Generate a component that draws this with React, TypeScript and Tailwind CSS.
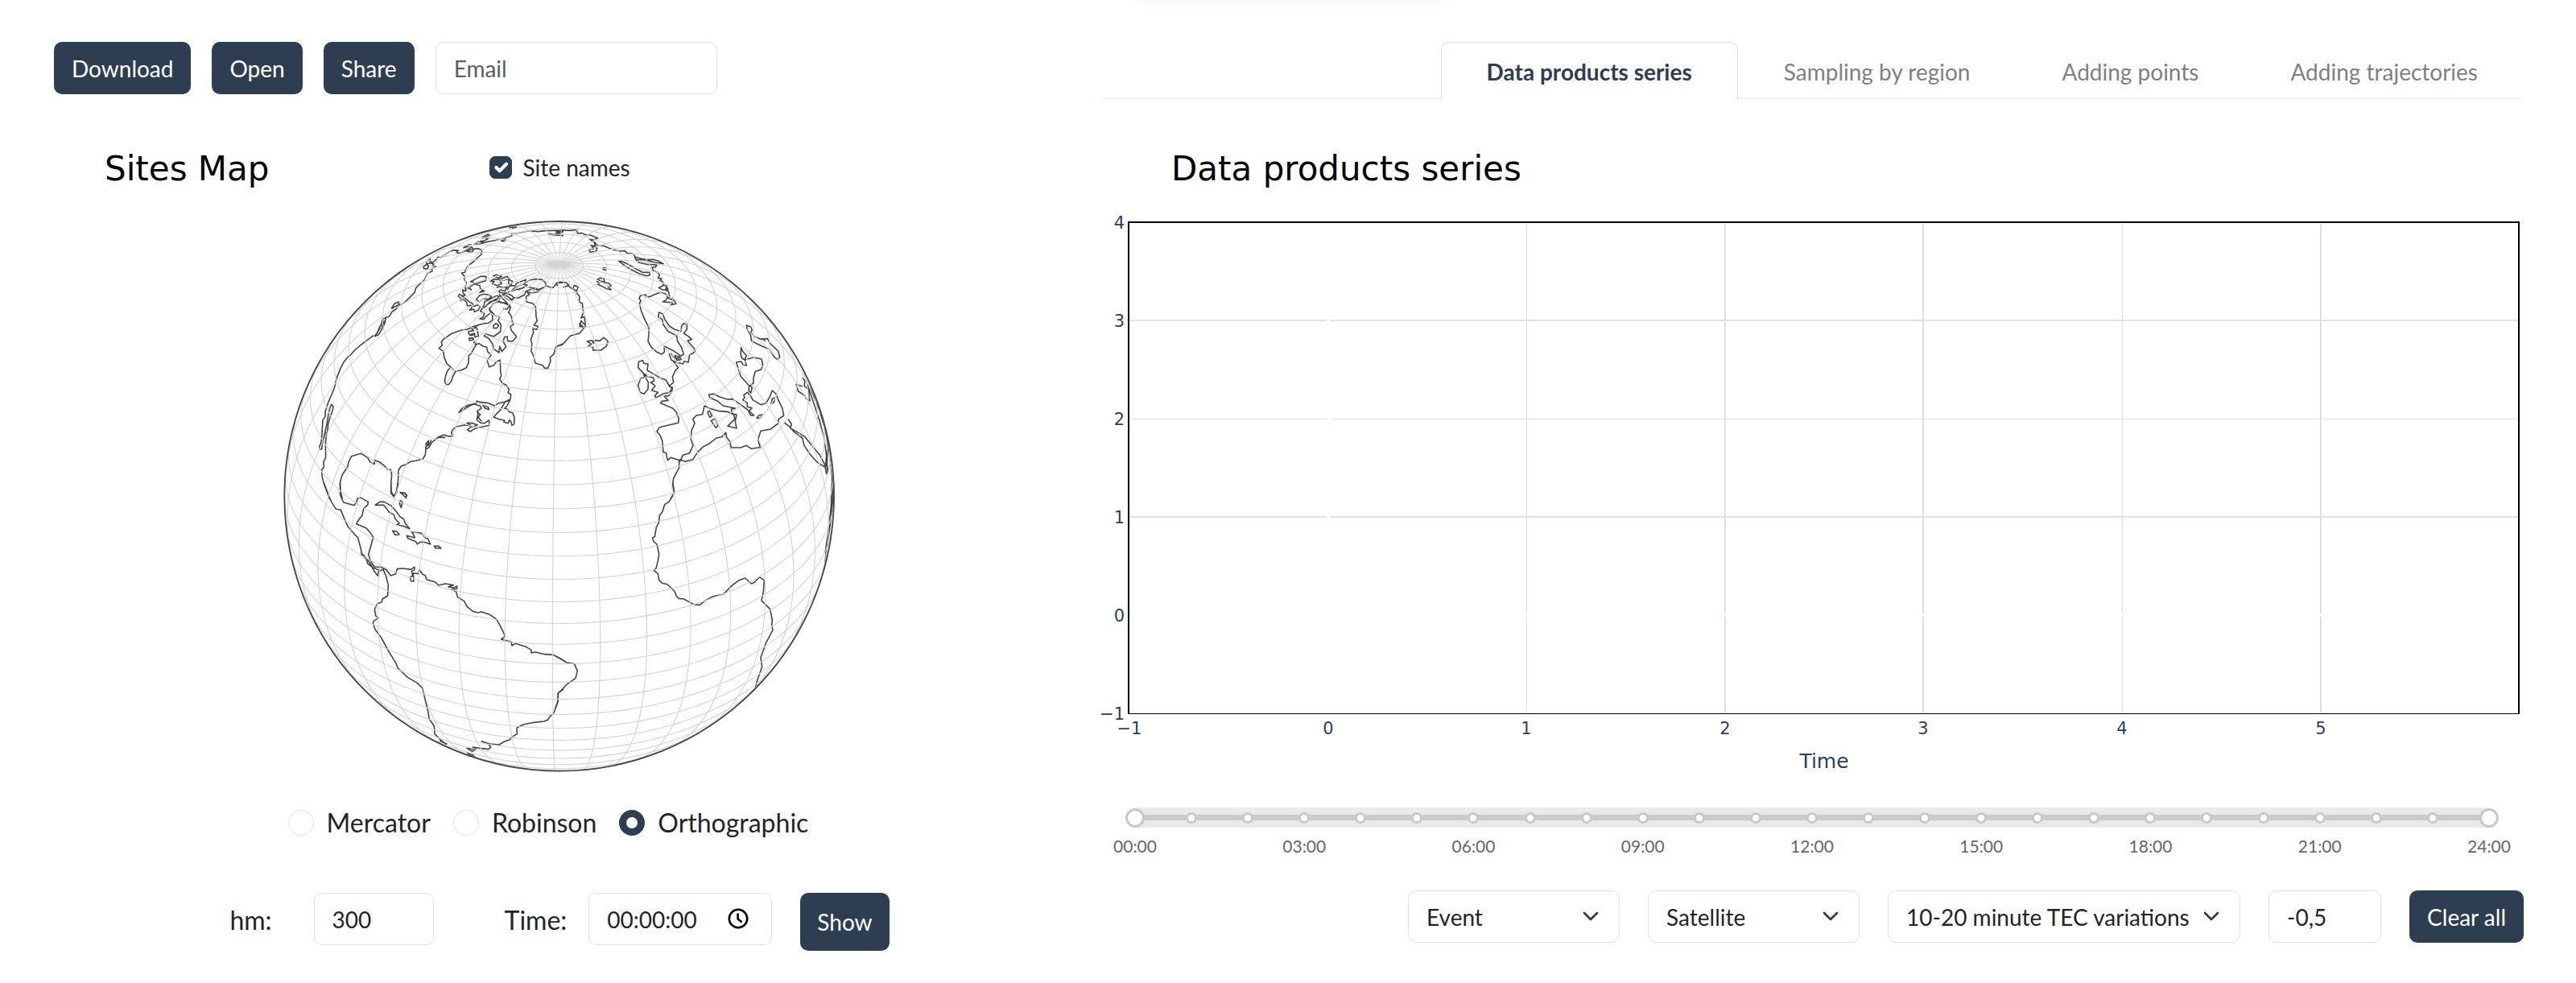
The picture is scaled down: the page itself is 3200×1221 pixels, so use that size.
import { ChevronDown } from "lucide-react";
import type { ReactNode } from "react";

const BTN =
  "h-[65px] rounded-[10px] bg-[#2c3e50] px-[22px] text-[28px] leading-[42px] text-white";
const FIELD =
  "h-[65px] rounded-[10px] border border-[#dee2e6] bg-white px-[22px] text-[28px] text-[#212529] placeholder:text-[#5b5e61]";

/* ---------- Globe (orthographic projection) ---------- */

const CX = 1064;
const CY = 1069;
const R = 1024;
const LON0 = -38.6;
const LAT0 = 32.6;

function project(lon: number, lat: number): [number, number] | null {
  const k = Math.PI / 180;
  const l = (lon - LON0) * k;
  const p = lat * k;
  const p0 = LAT0 * k;
  const c = Math.sin(p0) * Math.sin(p) + Math.cos(p0) * Math.cos(p) * Math.cos(l);
  if (c < 0) return null;
  return [
    CX + R * Math.cos(p) * Math.sin(l),
    CY - R * (Math.cos(p0) * Math.sin(p) - Math.sin(p0) * Math.cos(p) * Math.cos(l)),
  ];
}

function trace(points: [number, number][]): string {
  let d = "";
  let pen = false;
  for (const [lon, lat] of points) {
    const q = project(lon, lat);
    if (q) d += (pen ? "L" : "M") + q[0].toFixed(1) + " " + q[1].toFixed(1);
    pen = q !== null;
  }
  return d;
}

function graticule(): string {
  let d = "";
  for (let lon = -180; lon < 180; lon += 10) {
    const pts: [number, number][] = [];
    for (let lat = -90; lat <= 90; lat += 1) pts.push([lon, lat]);
    d += trace(pts);
  }
  for (let lat = -85; lat <= 85; lat += 5) {
    const pts: [number, number][] = [];
    for (let lon = -220; lon <= 140; lon += 1) pts.push([lon, lat]);
    d += trace(pts);
  }
  return d;
}

const GRATICULE = graticule();

/* Coastlines, grouped by quadrant of the globe */
const NORTH_WEST = [
  // Pacific coast, Baja California, Alaska
  "M209 1080L200 1055 188 1025 180 995 179 970 187 960 186 940 194 925 193 880 195 850 196 830",
  "M215 727L222 735 220 748 210 775 203 800 200 830 196 845 188 850 186 862 182 872 179 893 173 895 170 885 177 868 180 835 183 785 192 772 193 750 205 715 216 690 228 660 230 645 235 628 250 590 262 568 276 551 288 541 305 522 325 505 345 490 372 470",
  "M215 727L208 745 203 770 198 800 190 835 183 865",
  "M375 474L385 462 392 445 402 425 405 410 418 403 430 400 440 383 455 372 468 357 485 350 500 335 525 310 530 293 545 278 560 265 575 237 592 230",
  "M375 474L390 468 398 455 408 438 415 420 418 405 M380 468L398 440 M402 440L412 415",
  "M438 370L450 352 465 345 468 355 452 362 440 370",
  "M592 230L588 222 605 214 592 210 598 205 583 200 570 205 578 212 572 222 560 221 558 214 568 206 573 190 583 182 582 194 593 198 605 188 612 178 622 180 640 168 655 157 672 152 688 153 681 160 690 164 705 158 720 152 738 140 742 147 720 157 738 160 748 147 762 146 776 152 774 168 755 184 745 195 728 207 716 223 712 235 700 237 712 250 710 262 718 272 714 290 716 305 704 300 706 312 714 320 702 322 692 316 688 324 698 332 697 340 706 334",
  "M708 143L722 133 735 131 726 138Z M748 130L762 120 782 122 770 129Z M775 105L800 93 805 98 785 106 775 105 800 109 785 117 765 120",
  "M770 128L800 120 830 115 850 110 888 98 886 92 905 90 950 80 985 83 1010 80 1040 79 1080 78 M848 117L862 112 866 115 855 119Z M876 68L905 66 888 71 M1022 90L1050 94 1068 88 1055 84 1080 83 M1030 94L1080 98",
  // Canadian mainland and Hudson Bay
  "M706 334L718 345 722 360 735 358 738 368 730 376 746 372 748 382 762 376 770 362 760 356 745 362 740 350 728 344 712 330 700 322",
  "M770 380L785 388 780 402 768 408 782 410 790 400 806 388 M803 372L815 395 816 412 800 424 785 425 768 430 748 437 757 442 763 472 750 476 748 462 730 468 725 455 745 452 738 446 755 440",
  "M768 430L742 437 722 447 700 450 665 462 632 484 625 495 628 507 616 518 633 530 635 550 645 575 660 588 647 602 641 620 637 640 641 652 652 653 662 640 668 622 678 604 660 590 M678 604L700 599 718 590 726 572 727 545 736 537 755 503 765 500 780 510 794 514 797 530 810 543 795 562 803 587 820 581 830 568 844 562 845 600 848 620 842 632 852 648 866 655 878 672 873 682 884 690 882 708 860 718 840 722 822 732 800 722 770 719 757 714 755 723 735 730 715 742 690 757 702 742 725 730 745 725 770 733 774 742 758 752 762 758 757 785 772 796 786 797 802 786 805 805 780 810 750 817 732 828 722 822 733 812 760 804 742 797 720 796 735 806 710 804 680 810 668 820 662 832 668 845 650 846 635 840 612 850 640 850 M612 850L600 860 588 870 578 888 567 893 566 884 578 878 566 876 577 862 575 880 588 860",
  "M567 893L565 915 556 930 530 937 510 940 492 951 475 957 465 972 464 1000 462 1030 456 1056 447 1070 437 1058 437 1020 440 990 436 970 424 970 412 955 395 942 377 935 375 950 358 940 350 925 325 910 290 920 280 940 275 960 255 990 247 1020 248 1045 256 1080",
  "M757 755L770 765 762 775 775 790 M860 718L880 712 868 735 860 742 872 745 878 755 890 758 897 775 896 800 888 805 884 790 878 785 874 797 858 793 860 786 840 782 820 775 832 760 845 748 855 730 862 718 M778 728L800 738 802 746 788 742Z",
  // Baffin and the Arctic archipelago
  "M803 372L818 352 835 344 850 348 868 348 883 365 875 385 886 398 888 415 893 430 882 436 885 450 905 475 890 492 872 490 870 474 860 476 855 492 866 512 850 530 842 510 840 534 820 520 815 500 800 480 784 472 790 464 820 474 845 456 847 430 836 415 842 402 825 396Z",
  "M818 434L828 425 838 432 832 442 820 443Z M728 480L742 479 745 486 730 489Z M745 495L752 494 752 503Z M725 462L735 470 750 466",
  "M733 270L752 260 770 250 792 250 790 266 770 272 750 278 742 270Z M730 290L748 278 768 284 770 296 785 305 768 310 780 300 M714 300L724 292 736 300 730 292",
  "M755 335L768 320 785 316 800 318 812 325 800 335 780 333 765 345Z M785 345L802 337 830 322 840 325 830 338 805 345 790 362 778 370 770 380 785 355Z M795 355L830 333",
  "M818 248L830 244 850 250 838 256Z M808 268L820 260 835 262 850 258 870 250 878 258 858 264 842 268 850 276 835 284 815 278 822 268Z M830 292L842 288 858 292 870 288 862 305 845 300 838 308 855 312 870 312 850 320 868 322 885 335 895 332 885 340 870 335 858 325 M840 315L850 330 870 348 M845 345L880 358 870 372 855 370",
  "M876 262L890 268 885 280 875 276Z M870 300L880 284 900 285 905 275 925 268 940 262 935 275 915 285 895 295 885 305 900 300 925 295 945 282 930 280 950 265 975 260 1000 262 1014 275 1012 288 985 300 960 298 940 305 935 318 912 330 895 330 888 322 872 314 878 304 M930 292L910 300 M950 290L985 296 M850 350L838 340 845 330",
  // Greenland, west
  "M1030 290L1015 284 1008 290 990 300 985 308 960 312 945 308 952 318 940 325 942 345 965 350 976 362 978 400 982 415 970 432 985 436 980 448 966 445 968 460 958 485 962 500 960 530 968 545 975 573 1002 581 1010 592 1022 592 1032 565 1030 552 1045 538 1050 515 1062 508 1078 505 M1030 290L1042 292 1050 280 1062 286 M1055 276L1080 272",
  "M470 1055L488 1057 496 1066 492 1078",
].join("");

const NORTH_EAST = [
  "M0 83L20 80 25 86 0 90 20 92 M18 77L55 79 80 76 82 90 98 88 108 94 130 96 158 107 140 114 128 112 148 124 155 135 180 136 200 145 215 150 242 156 258 154 268 164 290 166 298 178 320 184 345 188 365 187 385 193 402 203 370 197 330 188 300 188 295 176",
  "M145 124L148 138 132 134 155 145 152 156 130 160 125 152 142 146 135 140 M178 217L188 220 186 227 178 224Z M155 262L165 256 182 260 182 272 200 276 208 285 196 287 207 300 190 296 172 286 158 280 165 272 154 270 180 270Z",
  "M236 193L250 195 275 207 300 222 325 235 350 235 352 245 340 248 312 240 285 226 262 213 248 202Z",
  "M298 186L310 198 340 205 378 207 372 216 360 216 364 228 382 236 388 245 382 256 396 258 390 265 400 270 402 282 414 286 420 300 400 300 385 292 402 284 M414 290L410 300 422 308 425 325 418 330 438 338 436 330 450 352 430 356 436 348 420 346 400 345 412 338 418 328 410 314 390 310 370 317 350 326 335 326 337 318 316 322 312 332 318 340 313 352 320 380 335 415 348 440 348 465 345 492 358 515 378 532 395 540 406 532 405 510 440 527 465 545 458 556 440 552 430 538 424 540 432 562 450 570 475 576 480 566 495 570 500 542 520 532 520 522 492 490 508 485 498 475 478 462 490 447 490 430 478 425 470 434 468 455 445 448 425 435 408 412 400 390 386 384 383 400 398 410 402 430 420 455 440 465 452 472 455 492 470 515 478 540 465 548",
  "M445 545L462 550 470 560 452 562Z M440 568L458 590 446 602 436 625 440 645 424 658 436 668 432 682 422 695 405 696 420 712 396 715 392 722 415 732 438 742 450 755 460 780 458 796 425 803 388 812 378 828 390 842 398 862 402 905 412 907 418 935 430 925 455 933 465 938 475 916 500 908 513 880 505 858 507 825 519 797 512 782 525 768 548 764 555 732 575 742 610 752 640 754 665 766 668 782 642 808 675 816 670 790 675 765 660 762 655 745 672 742 625 732 605 715 575 702 572 690 590 688 610 698 640 708 660 707 690 727 720 750 740 768 728 768 720 755 732 740 715 736 715 722 698 710 705 702 702 692 715 682 728 696 735 710 765 728 785 722 798 700 808 675 822 688 830 710 845 740 851 768 832 782 830 798 800 820 765 826 755 858 763 887 730 892 712 880 690 888 655 888 650 865 638 850 635 832 620 848 600 852 575 872 550 885 530 905 512 932 485 940 462 933 460 965 440 1002 437 1025 443 1055 430 1080",
  "M722 658L706 640 690 622 682 595 674 570 692 567 700 580 712 582 706 560 740 552 768 558 773 582 765 598 745 604 738 628 738 648 725 657 733 665 728 685 720 675Z M692 515L697 528 712 545 705 560 695 555 690 540Z",
  "M712 432L728 438 733 450 728 458 742 474 765 484 790 482 800 500 830 528 836 550 828 560 815 550 798 522 765 508 745 498 730 490 728 470 715 448Z M770 480L782 492",
  "M310 568L325 563 330 574 345 576 342 600 360 610 390 628 412 636 425 660 436 664 425 682 400 688 375 702 370 695 382 682 358 674 372 658 355 645 368 640 365 628 340 622 325 608 308 590Z M328 614L338 616 332 622Z M318 630L335 625 346 645 345 670 330 688 315 682 308 655Z",
  "M118 492L136 488 142 500 145 488 165 490 180 478 196 492 190 510 170 525 140 525 140 514 122 510 134 502Z",
  "M0 512L30 500 55 472 90 462 112 435 108 400 95 405 104 385 100 350 88 345 90 325 78 310 84 290 70 283 65 296 78 305 60 295 48 285 30 290 50 283 40 273 15 270 0 277 M88 425L105 440 90 436 96 415 108 430",
  "M567 756L574 750 583 770 575 775Z M580 788L595 780 606 806 598 814Z M750 778L758 768 772 765 764 777Z M804 724L808 706 817 702 814 720Z",
  "M853 795L870 808 890 830 920 852 927 880 948 912 975 942 1003 960 M867 782L880 800 875 815 905 832 930 848 955 880 985 915 1003 950 1010 985 1014 975 1008 930",
  "M921 628L930 640 927 658 942 670 948 714 934 706 930 695 905 678 897 652 920 660 M938 650L960 715 985 790 1003 860 1010 920 1006 960 M950 665L985 750 1010 840 1022 920 1030 990 1034 1080 M1014 895L1012 950 1016 980",
].join("");

const SOUTH_WEST = [
  "M187 0L200 35 215 70 232 97 250 100 262 130 275 160 300 190 313 202 325 245 328 268 345 283 350 300 366 312 374 328 388 346 390 330 408 322 418 345 427 380 425 420 405 432 403 443 386 450 376 470 380 495 390 503 373 514 370 522 378 545 400 575 430 630 455 670 463 690 500 725 535 745 555 765 565 810 575 850 580 880 598 905 600 935 625 960 645 975 M618 960L645 972 635 972",
  "M248 0L248 45 260 72 300 83 308 72 312 57 325 55 352 70 350 82 335 95 330 120 318 135 308 152 345 168 360 185 371 202 362 235 353 265 360 288 375 312 402 314 420 323 436 345 455 338 460 320 480 318 510 322 525 313 524 324 514 328 518 345 508 352 512 366 522 366 520 336 540 338 543 323 555 340 565 345 570 360 600 368 615 381 640 375 670 380 650 387 672 390 683 384 683 394 662 396 680 405 685 425 710 440 720 460 740 477 760 483 775 480 805 490 828 506 843 530 856 556 862 572 848 582 885 592 888 606 900 598 940 610 960 622 960 633 975 630 1010 638 1042 640 1060 650 1085 665",
  "M328 262L350 285 370 316 395 325",
  "M1080 768L1060 782 1058 815 1045 855 1028 872 1022 882 1008 888 970 892 930 900 906 912 907 935 888 946 880 956 860 963 840 975 805 972 775 962 800 972 809 984 800 992 768 988 742 984 755 992 740 1000 720 988 752 994 M720 1005L735 1012 750 1020 725 1012 745 1013 M820 1043L855 1050",
  "M378 82L395 70 412 70 440 86 460 110 470 125 485 135 490 150 507 170 482 160 458 156 468 150 452 132 448 118 430 108 410 82Z M443 178L458 180 468 192 452 193Z M514 182L550 187 565 205 575 208 584 228 560 220 545 220 535 228 530 218 500 206 496 196 526 204 520 190Z M598 235L615 235 624 243 603 243Z",
  "M472 36L488 38 495 44 492 54 482 44Z M472 65L480 70 475 92 469 78Z M437 0L438 30 447 50 458 36 462 0",
].join("");

const SOUTH_EAST = [
  "M0 645L20 655 42 669 70 673 82 700 75 727 40 752 20 775 10 783 9 815 0 840",
  "M437 0L443 35 423 70 407 80 398 108 388 120 386 145 376 165 370 200 362 203 365 217 378 228 386 265 382 290 375 318 366 325 382 338 386 362 398 373 418 378 445 405 450 420 460 430 478 432 515 452 537 455 560 437 588 422 625 415 660 380 685 362 707 354 730 375 742 370 760 350 778 362 775 405 768 438 800 470 808 510 806 530 810 547 785 595 765 650 770 685 752 735 745 765 725 785",
  "M1037 0L1032 80 1022 170 1010 250 1003 310 M1030 0L1027 90 1017 180 1005 260",
].join("");

function Globe() {
  return (
    <svg viewBox="36 42 2058 2058" className="w-[686px]" role="img" aria-label="Sites map">
      <g fill="none" stroke="#444" strokeWidth="4.8" strokeLinejoin="round">
        <path d={NORTH_WEST} />
        <path d={NORTH_EAST} transform="translate(1050 0)" />
        <path d={SOUTH_WEST} transform="translate(0 1020)" />
        <path d={SOUTH_EAST} transform="translate(1050 1020)" />
      </g>
      <path d={GRATICULE} fill="none" stroke="#d3d3d3" strokeWidth="3.4" />
      <circle cx={CX} cy={CY} r={R} fill="none" stroke="#444" strokeWidth="5.4" />
    </svg>
  );
}

/* ---------- Chart ---------- */

const X_TICKS = [-1, 0, 1, 2, 3, 4, 5];
const Y_TICKS = [-1, 0, 1, 2, 3, 4];
const X_GRID = [
  { v: 1, w: 1 },
  { v: 2, w: 2 },
  { v: 3, w: 2 },
  { v: 4, w: 1 },
  { v: 5, w: 2 },
];
const Y_GRID = [
  { v: 1, w: 2 },
  { v: 2, w: 1 },
  { v: 3, w: 2 },
];
const xPos = (v: number) => 37 + Math.round((v + 1) * 246.6);
const yPos = (v: number) => 636 - (v + 1) * 122;
const label = (v: number) => String(v).replace("-", "−");

function Chart() {
  return (
    <svg
      viewBox="0 0 1769 720"
      className="mt-4 w-full font-['DejaVu_Sans',sans-serif]"
      role="img"
      aria-label="Data products series chart"
    >
      <g stroke="#e0e0e0" shapeRendering="crispEdges">
        {X_GRID.map(({ v, w }) => (
          <line key={v} x1={xPos(v)} x2={xPos(v)} y1="26" y2="636" strokeWidth={w} />
        ))}
        {Y_GRID.map(({ v, w }) => (
          <line key={v} x1="36" x2="1763" y1={yPos(v)} y2={yPos(v)} strokeWidth={w} />
        ))}
      </g>
      <g stroke="#fff" strokeWidth="4">
        <line x1={xPos(0)} x2={xPos(0)} y1="26" y2="636" />
        <line x1="36" x2="1763" y1={yPos(0)} y2={yPos(0)} />
      </g>
      <g fill="none" stroke="#000" shapeRendering="crispEdges">
        <path d="M36 637V26H1763V637" strokeWidth="2" />
        <path d="M36 636.5H1763" />
      </g>
      <g fill="#2a3f5f" fontSize="21">
        {X_TICKS.map((v) => (
          <text key={v} x={xPos(v)} y="662" textAnchor="middle">
            {label(v)}
          </text>
        ))}
        {Y_TICKS.map((v) => (
          <text key={v} x="31" y={yPos(v) + 8} textAnchor="end">
            {label(v)}
          </text>
        ))}
      </g>
      <text x="900" y="704" fontSize="25" fill="#2a3f5f" textAnchor="middle">
        Time
      </text>
    </svg>
  );
}

/* ---------- Time range slider ---------- */

const THUMB =
  "pointer-events-none absolute inset-0 h-full w-full appearance-none bg-transparent " +
  "[&::-webkit-slider-thumb]:pointer-events-auto [&::-webkit-slider-thumb]:size-[24px] [&::-webkit-slider-thumb]:appearance-none " +
  "[&::-webkit-slider-thumb]:rounded-full [&::-webkit-slider-thumb]:border-[3px] [&::-webkit-slider-thumb]:border-solid " +
  "[&::-webkit-slider-thumb]:border-[#c8c8c8] [&::-webkit-slider-thumb]:bg-white";

const HOURS = Array.from({ length: 25 }, (_, i) => i);

function TimeRange() {
  return (
    <div className="mt-[33px] mr-[31px] ml-8">
      <div className="relative flex h-[25px] items-center">
        <div className="absolute inset-y-0 right-[6px] left-[6px] rounded-[10px] bg-[#e9e9e9]" />
        <div className="absolute right-3 left-3 h-[7px] bg-[#cbcbcb]" />
        <div className="relative flex w-full items-center justify-between px-[5px]">
          {HOURS.map((h) => (
            <span key={h} className="size-[14px] rounded-full border-[3px] border-[#c8c8c8] bg-white" />
          ))}
        </div>
        <input type="range" aria-label="Start time" min={0} max={24} defaultValue={0} className={THUMB} />
        <input type="range" aria-label="End time" min={0} max={24} defaultValue={24} className={THUMB} />
      </div>
      <div className="mt-[11px] flex justify-between text-[21px] leading-6 text-[#666]">
        {HOURS.filter((h) => h % 3 === 0).map((h) => (
          <span key={h} className="flex w-6 justify-center">
            {String(h).padStart(2, "0")}:00
          </span>
        ))}
      </div>
    </div>
  );
}

/* ---------- Form parts ---------- */

function Projection({ name, checked }: { name: string; checked?: boolean }) {
  return (
    <label className="mr-7 flex items-center gap-4 text-[32px] leading-8">
      <input
        type="radio"
        name="projection"
        defaultChecked={checked}
        className="size-8 appearance-none rounded-full border border-[#dee2e6] bg-white checked:border-[9px] checked:border-[#2c3e50]"
      />
      {name}
    </label>
  );
}

function Dropdown({ text, width }: { text: string; width: string }) {
  return (
    <div className={"relative " + width}>
      <select aria-label={text} className={FIELD + " w-full appearance-none"}>
        <option>{text}</option>
      </select>
      <ChevronDown
        className="pointer-events-none absolute top-4 right-5 size-8 text-[#343a40]"
        strokeWidth={2}
      />
    </div>
  );
}

function Tab({ active, children }: { active?: boolean; children: ReactNode }) {
  return (
    <button
      type="button"
      role="tab"
      aria-selected={!!active}
      className={
        active
          ? "h-[72px] rounded-t-[10px] border border-b-0 border-[#dee2e6] bg-white px-14 text-[28px] font-bold text-[#2c3e50]"
          : "h-[72px] border border-b-0 border-transparent px-14 text-[28px] text-[#808080]"
      }
    >
      {children}
    </button>
  );
}

function Title({ children }: { children: ReactNode }) {
  return (
    <h2 className="font-['DejaVu_Sans',sans-serif] text-[42px] leading-[48px] text-black">{children}</h2>
  );
}

export default function App() {
  return (
    <main className="grid grid-cols-[1256fr_1769fr] gap-x-[43px] bg-white pt-[52px] pr-[65px] pb-10 pl-[67px] font-['Lato',sans-serif] text-[#212529]">
      <section>
        <div className="flex gap-[26px]">
          <button type="button" className={BTN}>Download</button>
          <button type="button" className={BTN}>Open</button>
          <button type="button" className={BTN}>Share</button>
          <input type="email" aria-label="Email" placeholder="Email" className={FIELD + " w-[350px]"} />
        </div>

        <div className="mt-[69px] flex items-center gap-[273px] pl-[63px]">
          <Title>Sites Map</Title>
          <label className="flex items-center gap-[14px] pb-1 text-[28px] leading-[42px]">
            <span className="relative flex size-7">
              <input
                type="checkbox"
                defaultChecked
                className="size-7 appearance-none rounded-[7px] border border-[#dee2e6] checked:border-[#2c3e50] checked:bg-[#2c3e50] peer"
              />
              <svg
                viewBox="0 0 20 20"
                className="pointer-events-none absolute inset-0 hidden size-7 peer-checked:block"
                fill="none"
                stroke="#fff"
                strokeWidth="3"
                strokeLinecap="round"
                strokeLinejoin="round"
              >
                <path d="M6 10l3 3 6-6" />
              </svg>
            </span>
            Site names
          </label>
        </div>

        <div className="mt-10 flex justify-center">
          <Globe />
        </div>

        <div className="mt-[46px] flex justify-center">
          <Projection name="Mercator" />
          <Projection name="Robinson" />
          <Projection name="Orthographic" checked />
        </div>

        <div className="mt-[71px] flex items-start justify-center">
          <label htmlFor="hm" className="text-[32px] leading-[68px]">hm:</label>
          <input id="hm" defaultValue="300" className={FIELD + " ml-[52px] w-[149px]"} />
          <label htmlFor="time" className="ml-[88px] text-[32px] leading-[68px]">Time:</label>
          <div className="relative ml-[27px] w-[228px]">
            <input id="time" defaultValue="00:00:00" className={FIELD + " w-full"} />
            <svg
              viewBox="0 0 26 26"
              className="pointer-events-none absolute top-[19px] right-[29px] size-[26px]"
              fill="none"
              stroke="#000"
              strokeWidth="2.6"
            >
              <circle cx="13" cy="13" r="11.2" />
              <path d="M12.6 6.5v7l5 4" />
            </svg>
          </div>
          <button type="button" className="ml-[35px] h-[72px] rounded-[10px] bg-[#2c3e50] px-[21px] text-[28px] text-white">
            Show
          </button>
        </div>
      </section>

      <section className="relative">
        <div className="absolute -top-[76px] left-12 h-5 w-[380px] shadow-[0_4px_16px_2px_rgba(0,0,0,0.05)]" />
        <div role="tablist" className="flex h-[71px] items-start justify-end border-b border-[#eceeef]">
          <Tab active>Data products series</Tab>
          <Tab>Sampling by region</Tab>
          <Tab>Adding points</Tab>
          <Tab>Adding trajectories</Tab>
        </div>

        <div className="mt-[63px] pl-[89px]">
          <Title>Data products series</Title>
        </div>

        <Chart />
        <TimeRange />

        <div className="mt-[43px] flex justify-end gap-[35px]">
          <Dropdown text="Event" width="w-[263px]" />
          <Dropdown text="Satellite" width="w-[263px]" />
          <Dropdown text="10-20 minute TEC variations" width="w-[438px]" />
          <input aria-label="Shift" defaultValue="-0,5" className={FIELD + " w-[140px]"} />
          <button type="button" className={BTN}>Clear all</button>
        </div>
      </section>
    </main>
  );
}
